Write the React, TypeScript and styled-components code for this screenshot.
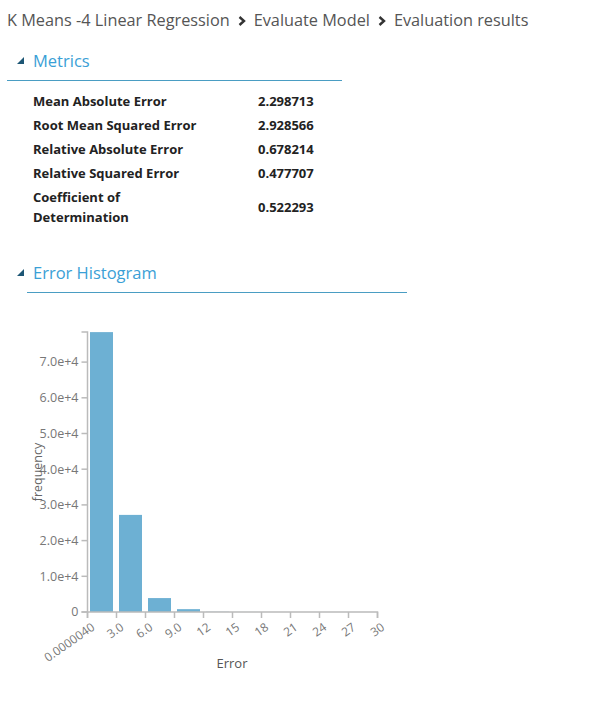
import React from "react";
import styled, { createGlobalStyle } from "styled-components";

const GlobalStyle = createGlobalStyle`
  body {
    margin: 0;
    background: #fff;
    font-family: "Segoe UI", "Open Sans", "Liberation Sans", sans-serif;
  }
`;

const Page = styled.div`
  width: 595px;
  padding: 8px 0 0 7px;
  box-sizing: border-box;
`;

const Breadcrumb = styled.div`
  display: flex;
  align-items: center;
  gap: 8px;
  font-size: 16.3px;
  line-height: 24px;
  color: #555;
  white-space: nowrap;
`;

const Chevron = styled.svg`
  display: block;
  margin-top: 1px;
`;

interface SectionHeadProps {
  lineStart: number;
  lineWidth: number;
}

const SectionHead = styled.div<SectionHeadProps>`
  display: flex;
  align-items: center;
  gap: 9px;
  padding-left: 10px;
  height: 40px;
  margin-top: 9px;
  margin-left: ${(p) => p.lineStart}px;
  width: ${(p) => p.lineWidth}px;
  box-sizing: border-box;
  border-bottom: 1px solid #4a9dc3;
`;

const Triangle = styled.span<{ shift: number }>`
  width: 0;
  height: 0;
  margin-left: ${(p) => p.shift}px;
  border-left: 7px solid transparent;
  border-bottom: 7px solid #1d5675;
`;

const SectionTitle = styled.span`
  font-size: 16.5px;
  color: #3aa0d6;
`;

const MetricsTable = styled.div`
  display: grid;
  grid-template-columns: 182px auto;
  column-gap: 43px;
  align-items: center;
  margin: 8px 0 0 26px;
  font-size: 13px;
  font-weight: 700;
  color: #222;
  line-height: 20px;
`;

const Cell = styled.div`
  padding: 2px 0;
`;

const HistogramBlock = styled.div`
  margin-top: 24px;
`;

const ChartSvg = styled.svg`
  display: block;
  margin: 7px 0 0 -7px;
  font-family: "Segoe UI", "Open Sans", "Liberation Sans", sans-serif;
`;

const metrics = [
  { name: "Mean Absolute Error", value: "2.298713" },
  { name: "Root Mean Squared Error", value: "2.928566" },
  { name: "Relative Absolute Error", value: "0.678214" },
  { name: "Relative Squared Error", value: "0.477707" },
  { name: "Coefficient of Determination", value: "0.522293" },
];

const counts = [78400, 27200, 3900, 800, 180, 40, 10, 4, 2, 1];
const xTicks = ["0.0000040", "3.0", "6.0", "9.0", "12", "15", "18", "21", "24", "27", "30"];
const yTicks = ["0", "1.0e+4", "2.0e+4", "3.0e+4", "4.0e+4", "5.0e+4", "6.0e+4", "7.0e+4"];

// svg origin is at page (0, 300)
const X0 = 87.5;
const BIN = 29;
const Y0 = 312;
const PER = 35.7 / 10000;
const TOP = 32;

function Arrow(): JSX.Element {
  return (
    <Chevron width={8} height={10} viewBox="0 0 8 10">
      <path d="M1.5,1 L6,5 L1.5,9" fill="none" stroke="#333" strokeWidth={2.4} />
    </Chevron>
  );
}

function Histogram(): JSX.Element {
  const axisColor = "#bbb";
  const labelColor = "#777";
  return (
    <ChartSvg width={420} height={390}>
      {counts.map((c, i) => {
        const h = c * PER;
        return (
          <rect
            key={i}
            x={X0 + i * BIN + 2.5}
            y={Y0 - h}
            width={BIN - 6}
            height={h}
            fill={i < 4 ? "#6db0d3" : "#d4e6f0"}
          />
        );
      })}
      <path
        d={`M${X0 - 6},${TOP}H${X0}V${Y0}H${X0 - 6}`}
        fill="none"
        stroke={axisColor}
        strokeWidth={1.5}
      />
      {yTicks.map((t, i) => {
        const y = Y0 - i * 10000 * PER;
        return (
          <g key={t}>
            <line x1={X0 - 6} x2={X0} y1={y} y2={y} stroke={axisColor} strokeWidth={1.5} />
            <text
              x={X0 - 9}
              y={y}
              dy="0.35em"
              textAnchor="end"
              fontSize={12.5}
              fill={labelColor}
            >
              {t}
            </text>
          </g>
        );
      })}
      <path
        d={`M${X0},${Y0 + 6}V${Y0}H${X0 + 10 * BIN}V${Y0 + 6}`}
        fill="none"
        stroke={axisColor}
        strokeWidth={1.5}
      />
      {xTicks.map((t, i) => {
        const x = X0 + i * BIN;
        return (
          <g key={t}>
            <line x1={x} x2={x} y1={Y0} y2={Y0 + 6} stroke={axisColor} strokeWidth={1.5} />
            <text
              transform={`translate(${x + 8},${Y0 + 17}) rotate(-35)`}
              textAnchor="end"
              fontSize={12}
              fill={labelColor}
            >
              {t}
            </text>
          </g>
        );
      })}
      <text
        transform="translate(42,172) rotate(-90)"
        textAnchor="middle"
        fontSize={12.5}
        fill="#666"
      >
        frequency
      </text>
      <text x={232} y={368} textAnchor="middle" fontSize={13} fill="#555">
        Error
      </text>
    </ChartSvg>
  );
}

function App(): JSX.Element {
  return (
    <Page>
      <GlobalStyle />
      <Breadcrumb>
        <span>K Means -4 Linear Regression</span>
        <Arrow />
        <span>Evaluate Model</span>
        <Arrow />
        <span>Evaluation results</span>
      </Breadcrumb>
      <SectionHead lineStart={0} lineWidth={335}>
        <Triangle shift={0} />
        <SectionTitle>Metrics</SectionTitle>
      </SectionHead>
      <MetricsTable>
        {metrics.map(({ name, value }) => (
          <React.Fragment key={name}>
            <Cell>{name}</Cell>
            <Cell>{value}</Cell>
          </React.Fragment>
        ))}
      </MetricsTable>
      <HistogramBlock>
        <SectionHead lineStart={20} lineWidth={380}>
          <Triangle shift={-20} />
          <SectionTitle>Error Histogram</SectionTitle>
        </SectionHead>
        <Histogram />
      </HistogramBlock>
    </Page>
  );
}

export default App;
